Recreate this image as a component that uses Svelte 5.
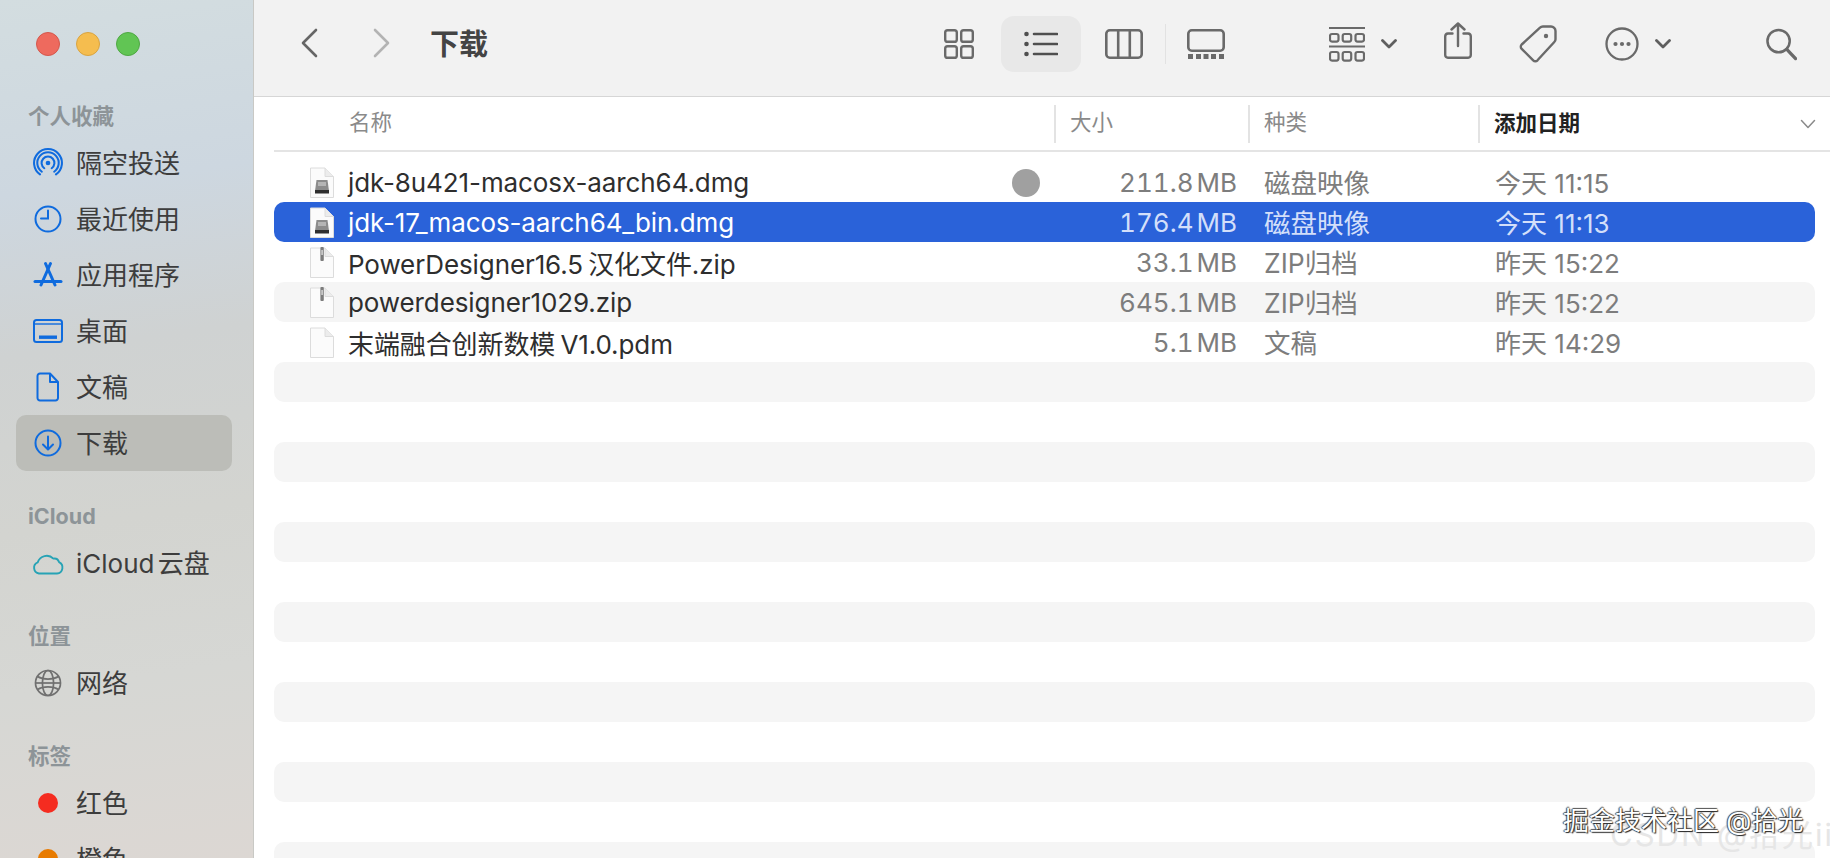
<script lang="ts">
  type Sec = { title: string; items: { icon: string; label: string; active?: boolean }[] };

  const sections: Sec[] = [
    {
      title: '个人收藏',
      items: [
        { icon: 'airdrop', label: '隔空投送' },
        { icon: 'clock', label: '最近使用' },
        { icon: 'apps', label: '应用程序' },
        { icon: 'desktop', label: '桌面' },
        { icon: 'doc', label: '文稿' },
        { icon: 'download', label: '下载', active: true }
      ]
    },
    { title: 'iCloud', items: [{ icon: 'cloud', label: 'iCloud 云盘' }] },
    { title: '位置', items: [{ icon: 'globe', label: '网络' }] },
    {
      title: '标签',
      items: [
        { icon: 'red', label: '红色' },
        { icon: 'orange', label: '橙色' }
      ]
    }
  ];

  const files = [
    { type: 'dmg', name: 'jdk-8u421-macosx-aarch64.dmg', size: '211.8 MB', kind: '磁盘映像', date: '今天 11:15', dot: true },
    { type: 'dmg', name: 'jdk-17_macos-aarch64_bin.dmg', size: '176.4 MB', kind: '磁盘映像', date: '今天 11:13', selected: true },
    { type: 'zip', name: 'PowerDesigner16.5 汉化文件.zip', size: '33.1 MB', kind: 'ZIP归档', date: '昨天 15:22' },
    { type: 'zip', name: 'powerdesigner1029.zip', size: '645.1 MB', kind: 'ZIP归档', date: '昨天 15:22' },
    { type: 'doc', name: '末端融合创新数模 V1.0.pdm', size: '5.1 MB', kind: '文稿', date: '昨天 14:29' }
  ];

  // empty striped rows fill the rest of the window
  const blanks = Array.from({ length: 13 }, (_, i) => i);
</script>

{#snippet sideIcon(name: string)}
  {#if name === 'airdrop'}
    <svg class="side-icon" width="30" height="30" viewBox="0 0 28 28" fill="none" stroke="#0f6bde" stroke-width="1.9" stroke-linecap="round">
      <circle cx="14" cy="14" r="2.2" fill="#0f6bde" stroke="none" />
      <path d="M10.56 18.9A6 6 0 1 1 17.44 18.9" />
      <path d="M8.26 22.19A10 10 0 1 1 19.74 22.19" />
      <path d="M6.54 24.65A13 13 0 1 1 21.46 24.65" />
    </svg>
  {:else if name === 'clock'}
    <svg class="side-icon" width="30" height="30" viewBox="0 0 30 30" fill="none" stroke="#0f6bde" stroke-width="2" stroke-linecap="round">
      <circle cx="15" cy="15" r="12.5" />
      <path d="M15 6.5V14.5H8" />
    </svg>
  {:else if name === 'apps'}
    <svg class="side-icon" width="30" height="30" viewBox="0 0 30 30" fill="none" stroke="#0f6bde" stroke-width="3" stroke-linecap="round">
      <path d="M17.5 3.5L8 25" />
      <path d="M12.5 3.5L22 25" />
      <path d="M2 21.5H28" />
    </svg>
  {:else if name === 'desktop'}
    <svg class="side-icon" width="32" height="30" viewBox="0 0 32 30" fill="none" stroke="#0f6bde" stroke-width="2">
      <rect x="2" y="4" width="28" height="22" rx="2.5" />
      <path d="M2 8H30" stroke-width="1.4" />
      <rect x="7" y="19.5" width="18" height="3.4" fill="#0f6bde" stroke="none" />
    </svg>
  {:else if name === 'doc'}
    <svg class="side-icon" width="30" height="30" viewBox="0 0 30 30" fill="none" stroke="#0f6bde" stroke-width="2" stroke-linejoin="round">
      <path d="M7 1.5H17L25 10V26A2.5 2.5 0 0 1 22.5 28.5H7A2.5 2.5 0 0 1 4.5 26V4A2.5 2.5 0 0 1 7 1.5Z" />
      <path d="M17 1.5V10H25" />
    </svg>
  {:else if name === 'download'}
    <svg class="side-icon" width="30" height="30" viewBox="0 0 30 30" fill="none" stroke="#0f6bde" stroke-width="2" stroke-linecap="round" stroke-linejoin="round">
      <circle cx="15" cy="15" r="12.5" />
      <path d="M15 8.5V21M10 16.5L15 21.5L20 16.5" />
    </svg>
  {:else if name === 'cloud'}
    <svg class="side-icon" width="34" height="26" viewBox="0 0 34 26" fill="none" stroke="#27a3b5" stroke-width="1.9" stroke-linejoin="round">
      <path d="M8 23.5H26A6 6 0 0 0 28 12.1A5 5 0 0 0 22.4 8.6A9.5 9.5 0 0 0 6.7 12.4A5.8 5.8 0 0 0 8 23.5Z" />
    </svg>
  {:else if name === 'globe'}
    <svg class="side-icon" width="30" height="30" viewBox="0 0 30 30" fill="none" stroke="#707070" stroke-width="1.7">
      <circle cx="15" cy="15" r="12.5" />
      <ellipse cx="15" cy="15" rx="5.6" ry="12.5" />
      <path d="M4.5 8.5C10 12 20 12 25.5 8.5" />
      <path d="M2.5 15H27.5" />
      <path d="M4.5 21.5C10 18 20 18 25.5 21.5" />
    </svg>
  {:else}
    <span class="tag-dot" class:red={name === 'red'} class:orange={name === 'orange'}></span>
  {/if}
{/snippet}

{#snippet fileIcon(type: string)}
  <svg class="file-icon" width="26" height="32" viewBox="0 0 26 32">
    <path d="M1.5 1H16L24.5 9.5V30.5H1.5Z" fill="#fbfbfb" stroke="#dcdcdc" />
    <path d="M16 1V9.5H24.5" fill="#ececec" stroke="#dcdcdc" />
    {#if type === 'dmg'}
      <path d="M7.5 13H18.5L20 24H6Z" fill="#8c8c8c" />
      <rect x="6" y="23" width="14" height="3.5" fill="#2f2f2f" />
      <rect x="9" y="15" width="8" height="4" fill="#b5b5b5" />
    {:else if type === 'zip'}
      <rect x="11.4" y="0" width="3.4" height="14" rx="1" fill="#7c7c7c" />
      <rect x="12.3" y="3" width="1.6" height="5" fill="#d0d0d0" />
    {/if}
  </svg>
{/snippet}

<div class="window">
  <aside class="sidebar">
    <div class="traffic">
      <span class="light close"></span>
      <span class="light min"></span>
      <span class="light max"></span>
    </div>

    {#each sections as sec, i}
      <h3 class="sec-title" class:first={i === 0}>{sec.title}</h3>
      {#each sec.items as item}
        <div class="side-item" class:active={item.active}>
          <span class="icon-box">{@render sideIcon(item.icon)}</span>
          <span class="side-label">{item.label}</span>
        </div>
      {/each}
    {/each}
  </aside>

  <main class="main">
    <header class="toolbar">
      <svg class="back" width="18" height="30" viewBox="0 0 18 30" fill="none" stroke="#666" stroke-width="2.6" stroke-linecap="round" stroke-linejoin="round">
        <path d="M16 2L3 15L16 28" />
      </svg>
      <svg class="forward" width="18" height="30" viewBox="0 0 18 30" fill="none" stroke="#b3b3b3" stroke-width="2.6" stroke-linecap="round" stroke-linejoin="round">
        <path d="M2 2L15 15L2 28" />
      </svg>
      <div class="title">下载</div>

      <div class="tools">
        <svg width="30" height="30" viewBox="0 0 30 30" fill="none" stroke="#6a6a6a" stroke-width="2.4">
          <rect x="1.2" y="1.2" width="11.6" height="11.6" rx="2.4" />
          <rect x="17.2" y="1.2" width="11.6" height="11.6" rx="2.4" />
          <rect x="1.2" y="17.2" width="11.6" height="11.6" rx="2.4" />
          <rect x="17.2" y="17.2" width="11.6" height="11.6" rx="2.4" />
        </svg>

        <div class="list-btn">
          <svg width="34" height="26" viewBox="0 0 34 26" fill="none" stroke="#4f4f4f" stroke-width="2.6" stroke-linecap="round">
            <circle cx="2.5" cy="3" r="2.3" fill="#4f4f4f" stroke="none" />
            <circle cx="2.5" cy="13" r="2.3" fill="#4f4f4f" stroke="none" />
            <circle cx="2.5" cy="23" r="2.3" fill="#4f4f4f" stroke="none" />
            <path d="M10 3H33M10 13H33M10 23H33" />
          </svg>
        </div>

        <svg class="t-cols" width="38" height="30" viewBox="0 0 38 30" fill="none" stroke="#6a6a6a" stroke-width="2.6">
          <rect x="1.3" y="1.3" width="35.4" height="27.4" rx="3.5" />
          <path d="M13.2 1.3V28.7M24.8 1.3V28.7" />
        </svg>

        <span class="t-sep"></span>

        <svg class="t-gallery" width="38" height="30" viewBox="0 0 38 30" fill="none" stroke="#6a6a6a" stroke-width="2.6">
          <rect x="1.3" y="1.3" width="35.4" height="20.4" rx="3.5" />
          <g fill="#6a6a6a" stroke="none">
            <rect x="1" y="25" width="5" height="5" />
            <rect x="9" y="25" width="5" height="5" />
            <rect x="16.5" y="25" width="5" height="5" />
            <rect x="24" y="25" width="5" height="5" />
            <rect x="32" y="25" width="5" height="5" />
          </g>
        </svg>

        <svg class="t-group" width="36" height="36" viewBox="0 0 36 36" fill="none" stroke="#6a6a6a" stroke-width="2.2">
          <path d="M0 2H36M0 20.5H36" />
          <rect x="1" y="8" width="8.5" height="7.6" rx="2" />
          <rect x="13.7" y="8" width="8.5" height="7.6" rx="2" />
          <rect x="26.5" y="8" width="8.5" height="7.6" rx="2" />
          <rect x="1" y="26" width="8.5" height="8.6" rx="2" />
          <rect x="13.7" y="26" width="8.5" height="8.6" rx="2" />
          <rect x="26.5" y="26" width="8.5" height="8.6" rx="2" />
        </svg>

        <svg class="t-chev" width="16" height="10" viewBox="0 0 16 10" fill="none" stroke="#5f5f5f" stroke-width="2.8" stroke-linecap="round" stroke-linejoin="round">
          <path d="M1.5 1.5L8 8L14.5 1.5" />
        </svg>

        <svg class="t-share" width="28" height="37" viewBox="0 0 28 37" fill="none" stroke="#6a6a6a" stroke-width="2.4" stroke-linecap="round" stroke-linejoin="round">
          <path d="M8.5 11.5H4A3 3 0 0 0 1.2 14.5V33A3 3 0 0 0 4 35.8H24A3 3 0 0 0 26.8 33V14.5A3 3 0 0 0 24 11.5H19.5" />
          <path d="M14 24V1.5M7.5 7.5L14 1.5L20.5 7.5" />
        </svg>

        <svg class="t-tag" width="38" height="38" viewBox="0 0 38 38" fill="none" stroke="#6a6a6a" stroke-width="2.4" stroke-linejoin="round">
          <path d="M24 1.5H32A4.5 4.5 0 0 1 36.5 6V14A4 4 0 0 1 35.3 17L18.5 35.3A3 3 0 0 1 14.2 35.3L2.7 23.8A3 3 0 0 1 2.7 19.5L21 2.7A4 4 0 0 1 24 1.5Z" />
          <circle cx="27" cy="11" r="2.2" fill="#6a6a6a" stroke="none" />
        </svg>

        <svg class="t-more" width="34" height="34" viewBox="0 0 34 34" fill="none" stroke="#6a6a6a" stroke-width="2.3">
          <circle cx="17" cy="17" r="15.5" />
          <g fill="#6a6a6a" stroke="none">
            <circle cx="10.5" cy="17" r="2.1" />
            <circle cx="17" cy="17" r="2.1" />
            <circle cx="23.5" cy="17" r="2.1" />
          </g>
        </svg>

        <svg class="t-chev small" width="16" height="10" viewBox="0 0 16 10" fill="none" stroke="#5f5f5f" stroke-width="2.8" stroke-linecap="round" stroke-linejoin="round">
          <path d="M1.5 1.5L8 8L14.5 1.5" />
        </svg>

        <svg class="t-search" width="31" height="33" viewBox="0 0 32 33" fill="none" stroke="#6a6a6a" stroke-width="2.6" stroke-linecap="round">
          <circle cx="13" cy="13" r="11.5" />
          <path d="M21.5 21.5L30.5 31" stroke-width="3.4" />
        </svg>
      </div>
    </header>

    <div class="list-head">
      <div class="head-cell name"><span>名称</span></div>
      <div class="head-cell"><span>大小</span></div>
      <div class="head-cell"><span>种类</span></div>
      <div class="head-cell sorted">
        <span>添加日期</span>
        <svg width="16" height="10" viewBox="0 0 16 10" fill="none" stroke="#8a8a8a" stroke-width="1.5" stroke-linecap="round" stroke-linejoin="round">
          <path d="M1.5 1.5L8 8.5L14.5 1.5" />
        </svg>
      </div>
    </div>

    <div class="rows">
      {#each files as f, i}
        <div class="row" class:selected={f.selected} class:odd={i % 2 === 1}>
          <div class="c-name">
            {@render fileIcon(f.type)}
            <span class="fname">{f.name}</span>
            {#if f.dot}<span class="dot"></span>{/if}
          </div>
          <div class="c-size">{f.size}</div>
          <div class="c-kind">{f.kind}</div>
          <div class="c-date">{f.date}</div>
        </div>
      {/each}
      {#each blanks as b}
        <div class="row" class:odd={(b + files.length) % 2 === 1}></div>
      {/each}
    </div>

    <div class="mark-back">CSDN @拾光ii</div>
    <div class="mark-front">掘金技术社区 @拾光</div>
  </main>
</div>

<style>
  :global(body) {
    margin: 0;
    background: #fff;
  }

  .window {
    display: flex;
    width: 1830px;
    height: 858px;
    overflow: hidden;
    font-family: Inter, "Noto Sans CJK SC", sans-serif;
  }

  .sidebar {
    width: 253px;
    flex: none;
    height: 858px;
    overflow: hidden;
    border-right: 1px solid #c9c9c5;
    background: linear-gradient(172deg, #d3dde0 0%, #cdd7e0 22%, #cfd2d2 40%, #d3d4d0 60%, #d6d7d4 78%, #dcd7d3 100%);
  }

  .traffic {
    display: flex;
    gap: 16px;
    padding: 32px 0 0 36px;
    height: 65px;
  }

  .light {
    width: 24px;
    height: 24px;
    border-radius: 50%;
    box-sizing: border-box;
  }
  .close { background: #ee6a5e; border: 1px solid #d4574c; }
  .min { background: #f5bd4f; border: 1px solid #d9a441; }
  .max { background: #61c554; border: 1px solid #4fa843; }

  .sec-title {
    margin: 26px 0 0;
    padding-left: 28px;
    height: 38px;
    line-height: 38px;
    font-size: 21.5px;
    font-weight: 700;
    color: #8d9498;
  }
  .sec-title.first { margin-top: 0; }

  .side-item {
    display: flex;
    align-items: center;
    height: 56px;
    margin: 0 21px 0 16px;
    border-radius: 10px;
    font-size: 26px;
    color: #3d3d3d;
  }
  .side-item.active { background: #bcbdb8; }

  .side-label {
    padding-bottom: 4px;
    word-spacing: -4px;
  }

  .icon-box {
    width: 60px;
    flex: none;
    display: flex;
    justify-content: center;
    padding-left: 4px;
    box-sizing: border-box;
  }

  .side-icon { display: block; }

  .tag-dot {
    width: 20px;
    height: 20px;
    border-radius: 50%;
  }
  .tag-dot.red { background: #f52c20; }
  .tag-dot.orange { background: #e87b00; }

  .main {
    flex: 1;
    min-width: 0;
    position: relative;
    background: #fff;
  }

  .toolbar {
    display: flex;
    align-items: center;
    height: 97px;
    padding-left: 46px;
    padding-bottom: 8px;
    box-sizing: border-box;
    background: #f2f2f2;
    border-bottom: 1px solid #d6d6d6;
  }

  .back { flex: none; margin-top: -2px; }
  .forward { flex: none; margin-left: 55px; margin-top: -2px; }

  .title {
    margin-left: 39px;
    padding-bottom: 4px;
    font-size: 29px;
    font-weight: 700;
    color: #444;
  }

  .tools {
    display: flex;
    align-items: center;
    margin-left: auto;
    padding-right: 33px;
  }
  .tools svg { flex: none; display: block; }

  .list-btn {
    width: 80px;
    height: 56px;
    margin-left: 27px;
    border-radius: 13px;
    background: #e8e8e8;
    display: flex;
    align-items: center;
    justify-content: center;
  }

  .t-cols { margin-left: 24px; }
  .t-sep {
    width: 1px;
    height: 40px;
    margin-left: 22px;
    background: #e2e2e2;
  }
  .t-gallery { margin-left: 21px; }
  .t-group { margin-left: 104px; }
  .t-chev { margin-left: 16px; }
  .t-share { margin-left: 47px; margin-top: -8px; }
  .t-tag { margin-left: 47px; }
  .t-more { margin-left: 48px; }
  .t-search { margin-left: 95px; }

  .list-head {
    display: grid;
    grid-template-columns: 780px 194px 230px 1fr;
    align-items: center;
    height: 55px;
    margin-left: 20px;
    margin-right: -15px;
    padding-right: 15px;
    box-sizing: border-box;
    border-bottom: 2px solid #e4e4e4;
  }

  .head-cell {
    height: 38px;
    line-height: 38px;
    padding-left: 14px;
    border-left: 2px solid #e3e3e3;
    font-size: 21.5px;
    color: #8a8a8a;
  }
  .head-cell span {
    display: block;
    margin-top: -2px;
  }
  .head-cell.name {
    border-left: 0;
    padding-left: 75px;
  }
  .head-cell.sorted {
    display: flex;
    align-items: center;
    justify-content: space-between;
    padding-right: 14px;
    font-weight: 700;
    color: #222;
  }

  .rows {
    height: 706px;
    padding: 10px 15px 0 20px;
    box-sizing: border-box;
    overflow: hidden;
  }

  .row {
    display: grid;
    grid-template-columns: 781px 182px 242px 1fr;
    align-items: center;
    height: 40px;
    border-radius: 10px;
    font-size: 26px;
    color: #7d7d7d;
  }
  .row.odd { background: #f5f5f5; }
  .row.selected {
    background: #2a62d9;
    color: #d3dffa;
  }

  .c-name {
    display: flex;
    align-items: center;
    min-width: 0;
    padding-left: 35px;
    color: #2e2e2e;
  }
  .selected .c-name { color: #fff; }

  .file-icon { flex: none; }
  .fname {
    margin-left: 13px;
    white-space: nowrap;
    letter-spacing: -0.1px;
    word-spacing: -2px;
  }

  .dot {
    width: 28px;
    height: 28px;
    margin-left: auto;
    margin-right: 15px;
    border-radius: 50%;
    background: #a0a0a0;
  }

  .c-size {
    text-align: right;
    white-space: nowrap;
    word-spacing: -4px;
    font-variant-numeric: tabular-nums;
  }
  .c-kind {
    padding: 0 0 2px 27px;
    font-size: 26.5px;
    white-space: nowrap;
  }
  .c-date {
    padding: 0 0 2px 16px;
    white-space: nowrap;
  }

  .mark-back {
    position: absolute;
    left: 1356px;
    bottom: 3px;
    font-size: 31px;
    letter-spacing: 2px;
    white-space: nowrap;
    color: #e6e6e6;
  }

  .mark-front {
    position: absolute;
    left: 1309px;
    bottom: 21px;
    font-size: 26px;
    white-space: nowrap;
    color: #fff;
    text-shadow: 1px 1px 1px #222, -1px 0 1px #444, 0 -1px 1px #555;
  }
</style>
